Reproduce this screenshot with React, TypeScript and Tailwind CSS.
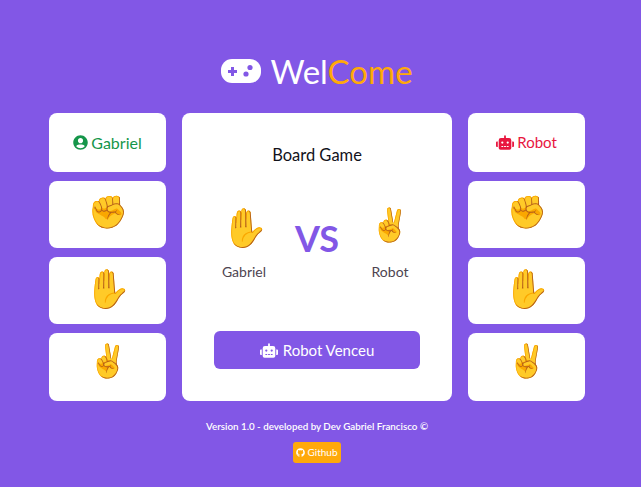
import { FaGithub, FaRobot, FaUserCircle } from 'react-icons/fa';

const moves = [
    { glyph: '✊', style: 'text-[32px] pb-[8px]' },
    { glyph: '✋', style: 'text-[38px] pb-[8px]' },
    { glyph: '✌️', style: 'text-[32px] pb-[14px]' },
];

function GamepadIcon() {
    return (
        <svg viewBox="0 0 40 24" className="w-[40px] h-[24px]">
            <rect x="0" y="0" width="40" height="24" rx="11" fill="#ffffff" />
            <path d="M10 8h3v3h3v3h-3v3h-3v-3H7v-3h3z" fill="#8257e6" />
            <circle cx="29" cy="8.5" r="2.6" fill="#8257e6" />
            <circle cx="25" cy="15" r="2.6" fill="#8257e6" />
        </svg>
    );
}

function MoveColumn({ header }: { header: React.ReactNode }) {
    return (
        <div className="w-[117px] grid grid-rows-[59px_67px_67px_68px] gap-[9px]">
            <div className="bg-white rounded-lg flex items-center justify-center">{header}</div>
            {moves.map((move) => (
                <div key={move.glyph} className={`bg-white rounded-lg flex items-center justify-center leading-none ${move.style}`}>
                    {move.glyph}
                </div>
            ))}
        </div>
    );
}

export default function App() {
    return (
        <div className="min-h-[487px] pr-[7px] bg-[#8257e6] flex flex-col items-center font-['Lato','Open_Sans',sans-serif] overflow-hidden">
            <h1 className="mt-[48px] h-[46px] flex items-center gap-[9px] text-[33px] font-normal leading-none text-white">
                <GamepadIcon />
                <span>
                    Wel<span className="text-[#ffa90a]">Come</span>
                </span>
            </h1>

            <div className="mt-[19px] flex gap-4 h-[288px]">
                <MoveColumn
                    header={
                        <span className="flex items-center gap-[3px] text-[16px] text-[#15964a]">
                            <FaUserCircle className="w-[15px] h-[15px]" /> Gabriel
                        </span>
                    }
                />

                <div className="w-[270px] bg-white rounded-lg flex flex-col items-center">
                    <p className="mt-[31px] text-[16.5px] leading-[22px] text-[#12121a]">Board Game</p>
                    <div className="mt-[36px] w-full h-[80px] flex items-center">
                        <div className="w-[124px] flex flex-col items-center">
                            <span className="h-[50px] pb-[2px] flex items-center text-[38px] leading-none">✋</span>
                            <span className="mt-[10px] text-[14px] leading-5 text-[#4d4450]">Gabriel</span>
                        </div>
                        <span className="w-[22px] flex justify-center text-[36px] leading-none font-bold text-[#8257e6] mb-[8px]">VS</span>
                        <div className="w-[124px] flex flex-col items-center">
                            <span className="h-[50px] pb-[6px] flex items-center text-[32px] leading-none">✌️</span>
                            <span className="mt-[10px] text-[14px] leading-5 text-[#4d4450]">Robot</span>
                        </div>
                    </div>
                    <button className="mt-[49px] w-[206px] h-[38px] bg-[#8257e6] rounded-md text-white text-[15px] flex items-center justify-center gap-[5px]">
                        <FaRobot className="w-[18px] h-[15px]" /> Robot Venceu
                    </button>
                </div>

                <MoveColumn
                    header={
                        <span className="flex items-center gap-[3px] text-[15px] text-[#e8173f]">
                            <FaRobot className="w-[18px] h-[15px]" /> Robot
                        </span>
                    }
                />
            </div>

            <p className="mt-[17px] text-[9.8px] leading-[16px] font-semibold text-white">Version 1.0 - developed by Dev Gabriel Francisco ©</p>
            <a className="mt-[8px] h-[21px] w-[48px] bg-[#ffa90a] rounded-[3px] text-white text-[10px] flex items-center justify-center gap-[2px]">
                <FaGithub className="w-[9px] h-[9px]" /> Github
            </a>
        </div>
    );
}
